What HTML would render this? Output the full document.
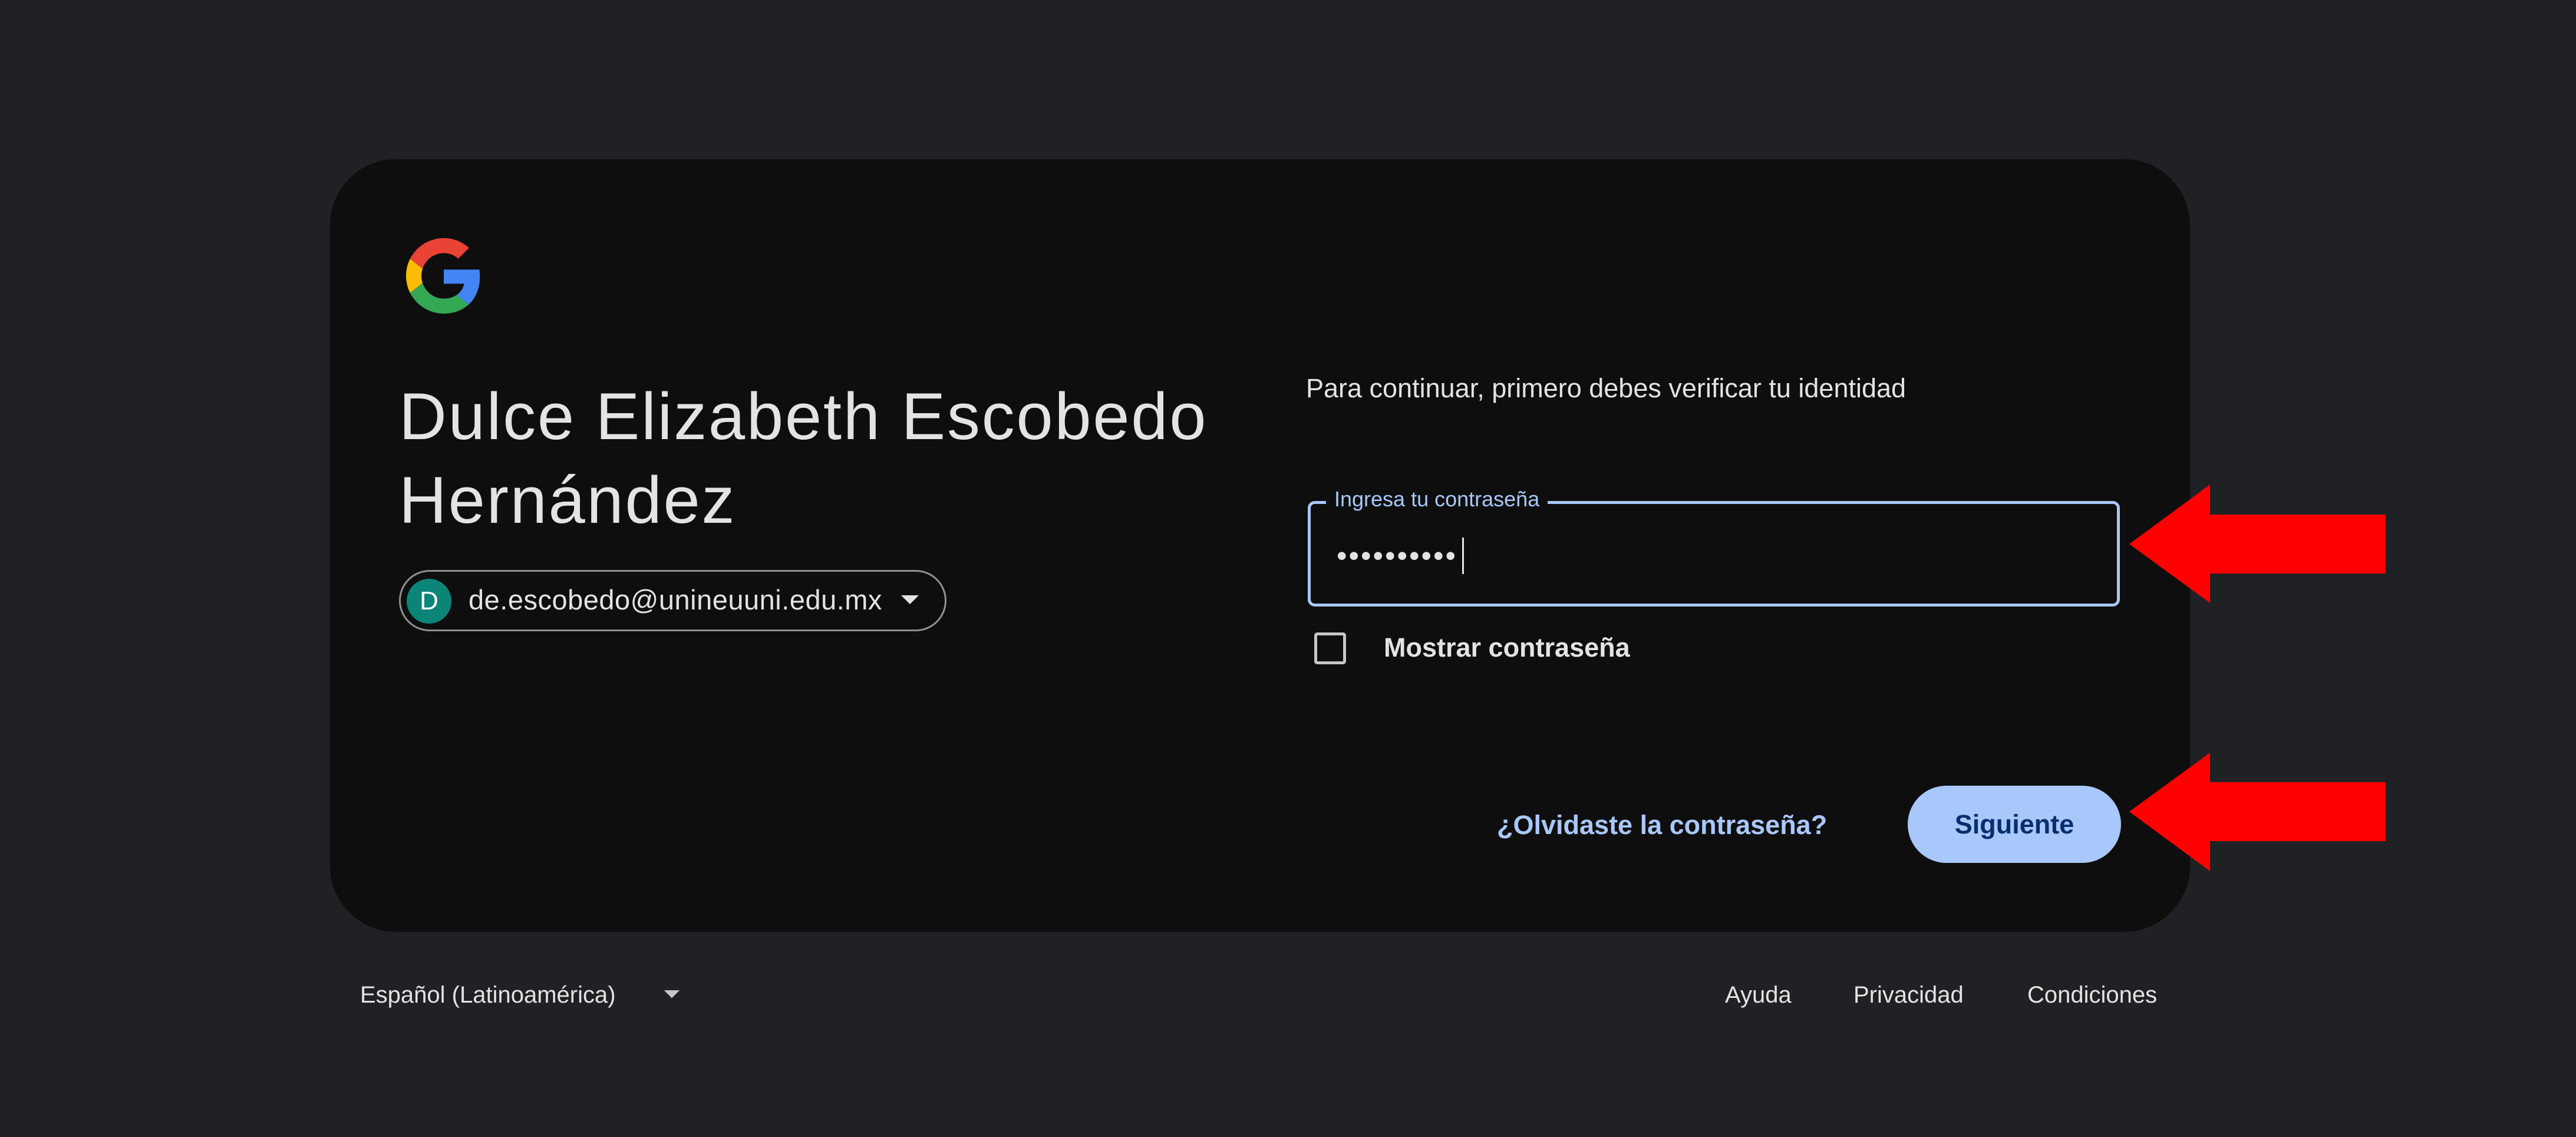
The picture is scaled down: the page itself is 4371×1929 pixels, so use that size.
<!DOCTYPE html>
<html><head><meta charset="utf-8"><style>
*{margin:0;padding:0;box-sizing:border-box}
html,body{width:4371px;height:1929px;background:#202124;overflow:hidden;font-family:"Liberation Sans",sans-serif;color:#e3e3e3}
.a{position:absolute;white-space:nowrap}
#card{position:absolute;left:560px;top:270px;width:3156px;height:1311px;background:#0e0e0e;border-radius:112px}
</style></head><body>
<div id="card"></div>
<svg class="a" style="left:689px;top:404px" width="128" height="128" viewBox="0 0 48 48">
<path fill="#EA4335" d="M24 9.5c3.540 0 6.71 1.22 9.21 3.6l6.850-6.85C35.9 2.38 30.470 0 24 0 14.62 0 6.51 5.38 2.56 13.22l7.98 6.19C12.43 13.72 17.74 9.5 24 9.5z"/>
<path fill="#4285F4" d="M46.98 24.55c0-1.57-.15-3.09-.38-4.55H24v9.02h12.94c-.58 2.96-2.26 5.48-4.78 7.18l7.73 6c4.51-4.18 7.09-10.36 7.09-17.65z"/>
<path fill="#FBBC05" d="M10.53 28.59c-.48-1.45-.76-2.990-.76-4.59s.27-3.14.76-4.59l-7.98-6.19C.92 16.46 0 20.12 0 24c0 3.88.92 7.54 2.56 10.78l7.97-6.19z"/>
<path fill="#34A853" d="M24 48c6.48 0 11.93-2.13 15.89-5.81l-7.73-6c-2.15 1.45-4.92 2.3-8.16 2.3-6.26 0-11.57-4.22-13.47-9.91l-7.98 6.19C6.51 42.62 14.62 48 24 48z"/>
</svg>
<div class="a" style="left:677px;top:636px;font-size:112px;line-height:142px;color:#e3e3e3;letter-spacing:2.7px">Dulce Elizabeth Escobedo<br>Hernández</div>
<div class="a" style="left:677px;top:967px;width:929px;height:104px;border:3px solid #8e918f;border-radius:52px"></div>
<div class="a" style="left:690px;top:982px;width:76px;height:76px;border-radius:50%;background:#0b8577;color:#fff;font-size:44px;line-height:76px;text-align:center">D</div>
<div class="a" style="left:795px;top:990px;font-size:47px;line-height:56px;color:#e3e3e3;letter-spacing:0.5px">de.escobedo@unineuuni.edu.mx</div>
<svg class="a" style="left:1529px;top:1010px" width="30" height="18" viewBox="0 0 10 6"><path d="M0 0h10L5 5z" fill="#e3e3e3"/></svg>
<div class="a" style="left:2216px;top:632px;font-size:45px;line-height:54px;color:#e3e3e3">Para continuar, primero debes verificar tu identidad</div>
<div class="a" style="left:2219px;top:850px;width:1378px;height:179px;border:5px solid #a8c7fa;border-radius:12px"></div>
<div class="a" style="left:2250px;top:822px;padding:0 14px;background:#0e0e0e;font-size:36px;line-height:50px;color:#a8c7fa">Ingresa tu contraseña</div>
<div class="a" style="left:2268px;top:915px;font-size:50px;line-height:56px;color:#e3e3e3;letter-spacing:3px">••••••••••</div>
<div class="a" style="left:2481px;top:912px;width:3px;height:62px;background:#e3e3e3"></div>
<div class="a" style="left:2230px;top:1073px;width:54px;height:54px;border:5px solid #c4c7c5;border-radius:5px"></div>
<div class="a" style="left:2348px;top:1072px;font-size:45px;line-height:54px;font-weight:bold;color:#e3e3e3">Mostrar contraseña</div>
<div class="a" style="left:2540px;top:1373px;font-size:45px;line-height:54px;font-weight:bold;color:#a8c7fa">¿Olvidaste la contraseña?</div>
<div class="a" style="left:3237px;top:1333px;width:362px;height:131px;border-radius:66px;background:#a8c7fa;color:#062e6f;font-size:45px;font-weight:bold;line-height:131px;text-align:center">Siguiente</div>
<svg class="a" style="left:0;top:0" width="4371" height="1929"><path fill="#ff0000" d="M3613 923L3750 822V873H4048V973H3750V1023Z"/><path fill="#ff0000" d="M3613 1377L3750 1277V1327H4048V1427H3750V1478Z"/></svg>
<div class="a" style="left:611px;top:1664px;font-size:40px;line-height:48px;color:#e3e3e3">Español (Latinoamérica)</div>
<svg class="a" style="left:1126px;top:1680px" width="28" height="16" viewBox="0 0 10 6"><path d="M0 0h10L5 5z" fill="#c4c7c5"/></svg>
<div class="a" style="left:2927px;top:1664px;font-size:40px;line-height:48px;color:#e3e3e3">Ayuda</div>
<div class="a" style="left:3145px;top:1664px;font-size:40px;line-height:48px;color:#e3e3e3">Privacidad</div>
<div class="a" style="left:3440px;top:1664px;font-size:40px;line-height:48px;color:#e3e3e3">Condiciones</div>
</body></html>
